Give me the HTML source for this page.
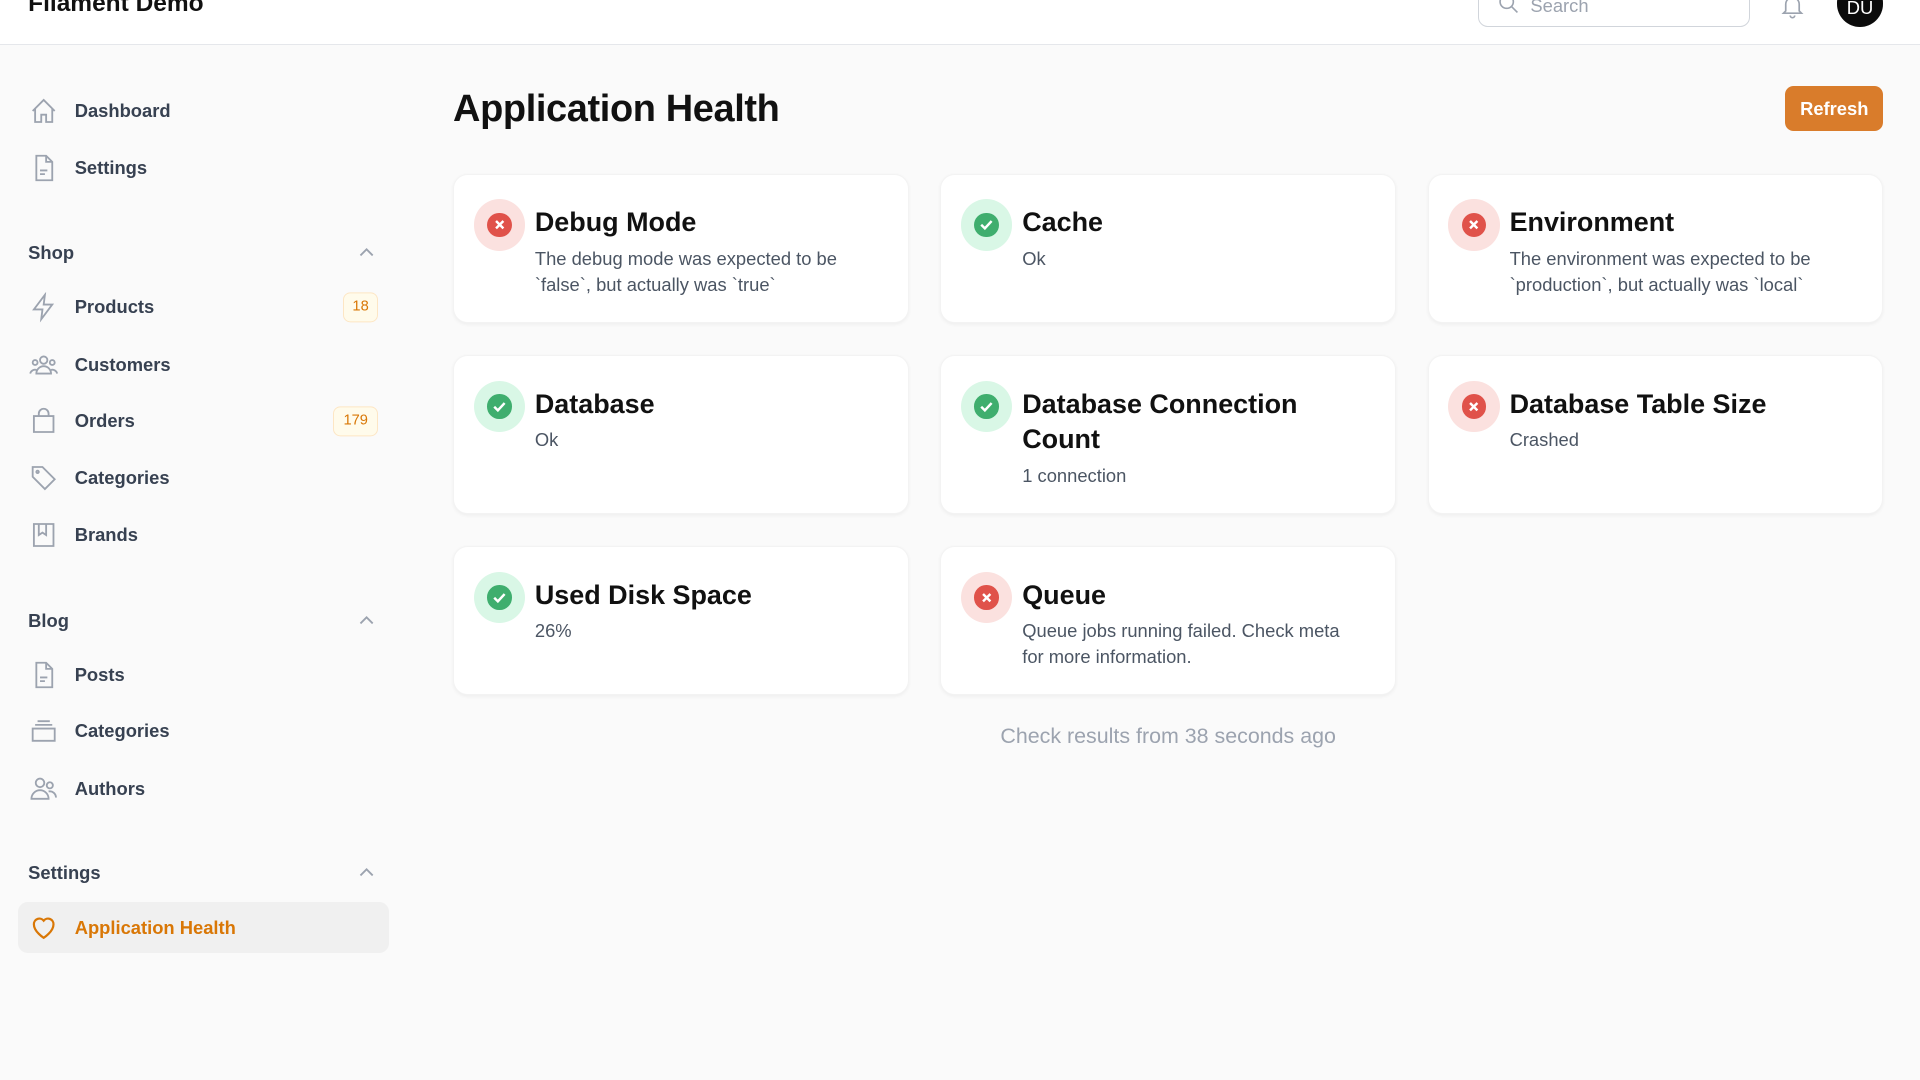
<!DOCTYPE html>
<html><head><meta charset="utf-8"><style>
*{box-sizing:border-box;margin:0;padding:0}
html,body{width:1920px;height:1080px;overflow:hidden;background:#fafafa}
#r{zoom:1.22449;width:1568px;height:882px;position:relative;font-family:"Liberation Sans",sans-serif;color:#111827}
.hdr{position:absolute;left:0;top:0;width:1568px;height:37px;background:#fff;border-bottom:1px solid #e5e7eb}
.brand{position:absolute;left:23px;top:-8px;font-size:20px;font-weight:bold;color:#111}
.search{position:absolute;left:1207px;top:-10px;width:222px;height:32px;border:1px solid #d1d5db;border-radius:8px;background:#fff}
.search span{position:absolute;left:42px;top:5px;color:#9ca3af;font-size:15px}
.av{position:absolute;left:1500px;top:-16px;width:38px;height:38px;border-radius:50%;background:#0b0b0b;color:#fff;font-size:15px;text-align:center;line-height:46px}
.it{position:absolute;left:61px;transform:translateY(-50%);font-size:15px;color:#374151;font-weight:600}
.ic{position:absolute;left:24px;transform:translateY(-50%)}
.grp{position:absolute;left:23px;transform:translateY(-50%);font-size:15px;font-weight:bold;color:#374151}
.chev{position:absolute;left:292px;transform:translateY(-50%)}
.badge{position:absolute;transform:translateY(-50%);border:1px solid #fde6c4;background:#fffbeb;color:#d97706;font-size:12px;border-radius:6px;height:24px;line-height:22px;text-align:center}
h1{position:absolute;left:370px;top:72px;font-size:31px;font-weight:bold;color:#111;letter-spacing:-0.3px}
.btn{position:absolute;left:1458px;top:70px;width:80px;height:37px;background:#d97c2b;border-radius:7px;color:#fff;font-weight:bold;font-size:15px;text-align:center;line-height:37px}
.card{position:absolute;width:372px;background:#fff;border-radius:12px;box-shadow:0 1px 3px rgba(0,0,0,.05);border:1px solid #f3f3f3}
.ci{position:absolute;left:16px;top:20px;width:42px;height:42px;border-radius:50%}
.ci.bad{background:#fbe1df}.ci.ok{background:#d9f7e6}
.ci i{position:absolute;left:11px;top:11px;width:20px;height:20px;border-radius:50%}
.bad i{background:#e0524a}.ok i{background:#3fae6e}
.ci svg{position:absolute;left:0;top:0}
.ct{position:absolute;left:66px;top:25px;font-size:22px;font-weight:bold;color:#111;line-height:29px;width:290px}
.cd{position:absolute;left:66px;font-size:15px;color:#4b5563;line-height:21px;width:285px}
.foot{position:absolute;left:770px;width:368px;top:591px;text-align:center;color:#9ca3af;font-size:17.5px}
</style></head><body><div id="r">
<div class="hdr"><div class="brand">Filament Demo</div>
<div class="search"><svg style="position:absolute;left:14px;top:2px" width="20" height="20" viewBox="0 0 24 24" fill="none" stroke="#9ca3af" stroke-width="1.6"><circle cx="10.5" cy="10.5" r="6.5"/><path d="M15.5 15.5L21 21"/></svg><span>Search</span></div>
<svg style="position:absolute;left:1453px;top:-6px" width="22" height="22" viewBox="0 0 24 24" fill="none" stroke="#9ca3af" stroke-width="1.5"><path d="M6 16V10a6 6 0 0112 0v6l2 2H4z M10 20a2 2 0 004 0"/></svg>
<div class="av">DU</div></div>

<svg class="ic" style="top:91px" width="24" height="24" viewBox="0 0 24 24" fill="none" stroke="#9ca3af" stroke-width="1.5"><path d="M3 12L12 3l9 9M5 10v11h5v-6h4v6h5V10"/></svg>
<div class="it" style="top:91px">Dashboard</div>
<svg class="ic" style="top:137px" width="24" height="24" viewBox="0 0 24 24" fill="none" stroke="#9ca3af" stroke-width="1.5"><path d="M6 2h8l5 5v15H6z M14 2v5h5 M9 14h6 M9 17h4"/></svg>
<div class="it" style="top:137px">Settings</div>

<div class="grp" style="top:207px">Shop</div>
<svg class="chev" style="top:207px" width="14" height="14" viewBox="0 0 14 14" fill="none" stroke="#9ca3af" stroke-width="1.5"><path d="M2 9l5-5 5 5"/></svg>
<svg class="ic" style="top:251px" width="24" height="24" viewBox="0 0 24 24" fill="none" stroke="#9ca3af" stroke-width="1.5"><path d="M13 2L4 14h7l-1 8 9-12h-7z"/></svg>
<div class="it" style="top:251px">Products</div><div class="badge" style="top:251px;left:280px;width:29px">18</div>
<svg class="ic" style="top:298px" width="24" height="24" viewBox="0 0 24 24" fill="none" stroke="#9ca3af" stroke-width="1.5"><circle cx="12" cy="8" r="3"/><circle cx="5" cy="10" r="2"/><circle cx="19" cy="10" r="2"/><path d="M6 19a6 6 0 0112 0z M1 19a4 4 0 015-3 M23 19a4 4 0 00-5-3"/></svg>
<div class="it" style="top:298px">Customers</div>
<svg class="ic" style="top:344px" width="24" height="24" viewBox="0 0 24 24" fill="none" stroke="#9ca3af" stroke-width="1.5"><path d="M4 8h16v13H4z M8 8V6a4 4 0 018 0v2"/></svg>
<div class="it" style="top:344px">Orders</div><div class="badge" style="top:344px;left:272px;width:37px">179</div>
<svg class="ic" style="top:390px" width="24" height="24" viewBox="0 0 24 24" fill="none" stroke="#9ca3af" stroke-width="1.5"><path d="M3 3h8l10 10-8 8L3 11z"/><circle cx="7" cy="7" r="1"/></svg>
<div class="it" style="top:390px">Categories</div>
<svg class="ic" style="top:437px" width="24" height="24" viewBox="0 0 24 24" fill="none" stroke="#9ca3af" stroke-width="1.5"><path d="M4 3h16v18H4z M8 3v9l3-2 3 2V3"/></svg>
<div class="it" style="top:437px">Brands</div>

<div class="grp" style="top:507px">Blog</div>
<svg class="chev" style="top:507px" width="14" height="14" viewBox="0 0 14 14" fill="none" stroke="#9ca3af" stroke-width="1.5"><path d="M2 9l5-5 5 5"/></svg>
<svg class="ic" style="top:551px" width="24" height="24" viewBox="0 0 24 24" fill="none" stroke="#9ca3af" stroke-width="1.5"><path d="M6 2h8l5 5v15H6z M14 2v5h5 M9 14h6 M9 17h4"/></svg>
<div class="it" style="top:551px">Posts</div>
<svg class="ic" style="top:597px" width="24" height="24" viewBox="0 0 24 24" fill="none" stroke="#9ca3af" stroke-width="1.5"><path d="M3 10h18v10H3z M5 7h14 M7 4h10"/></svg>
<div class="it" style="top:597px">Categories</div>
<svg class="ic" style="top:644px" width="24" height="24" viewBox="0 0 24 24" fill="none" stroke="#9ca3af" stroke-width="1.5"><circle cx="9" cy="7" r="3.5"/><circle cx="17" cy="9" r="2.5"/><path d="M2 20a7 7 0 0114 0z M16 14a5 5 0 016 5"/></svg>
<div class="it" style="top:644px">Authors</div>

<div class="grp" style="top:713px">Settings</div>
<svg class="chev" style="top:713px" width="14" height="14" viewBox="0 0 14 14" fill="none" stroke="#9ca3af" stroke-width="1.5"><path d="M2 9l5-5 5 5"/></svg>
<div style="position:absolute;left:15px;top:737px;width:303px;height:41px;background:#f0f0f0;border-radius:8px"></div>
<svg class="ic" style="top:758px" width="24" height="24" viewBox="0 0 24 24" fill="none" stroke="#d97706" stroke-width="1.8"><path d="M12 20s-8-5-8-11a4.5 4.5 0 018-3 4.5 4.5 0 018 3c0 6-8 11-8 11z"/></svg>
<div class="it" style="top:758px;color:#d97706">Application Health</div>

<h1>Application Health</h1>
<div class="btn">Refresh</div>

<div class="card" style="left:370px;top:142px;height:122px"><div class="ci bad"><i></i><svg width="42" height="42"><path d="M18 18l6 6M24 18l-6 6" stroke="#fff" stroke-width="2"/></svg></div><div class="ct">Debug Mode</div><div class="cd" style="top:58px">The debug mode was expected to be `false`, but actually was `true`</div></div>
<div class="card" style="left:768px;top:142px;height:122px"><div class="ci ok"><i></i><svg width="42" height="42"><path d="M16.5 21l3 3 5.5-6" fill="none" stroke="#fff" stroke-width="2"/></svg></div><div class="ct">Cache</div><div class="cd" style="top:58px">Ok</div></div>
<div class="card" style="left:1166px;top:142px;height:122px"><div class="ci bad"><i></i><svg width="42" height="42"><path d="M18 18l6 6M24 18l-6 6" stroke="#fff" stroke-width="2"/></svg></div><div class="ct">Environment</div><div class="cd" style="top:58px;width:300px">The environment was expected to be `production`, but actually was `local`</div></div>

<div class="card" style="left:370px;top:290px;height:130px"><div class="ci ok"><i></i><svg width="42" height="42"><path d="M16.5 21l3 3 5.5-6" fill="none" stroke="#fff" stroke-width="2"/></svg></div><div class="ct">Database</div><div class="cd" style="top:58px">Ok</div></div>
<div class="card" style="left:768px;top:290px;height:130px"><div class="ci ok"><i></i><svg width="42" height="42"><path d="M16.5 21l3 3 5.5-6" fill="none" stroke="#fff" stroke-width="2"/></svg></div><div class="ct">Database Connection Count</div><div class="cd" style="top:87px">1 connection</div></div>
<div class="card" style="left:1166px;top:290px;height:130px"><div class="ci bad"><i></i><svg width="42" height="42"><path d="M18 18l6 6M24 18l-6 6" stroke="#fff" stroke-width="2"/></svg></div><div class="ct">Database Table Size</div><div class="cd" style="top:58px">Crashed</div></div>

<div class="card" style="left:370px;top:446px;height:122px"><div class="ci ok"><i></i><svg width="42" height="42"><path d="M16.5 21l3 3 5.5-6" fill="none" stroke="#fff" stroke-width="2"/></svg></div><div class="ct">Used Disk Space</div><div class="cd" style="top:58px">26%</div></div>
<div class="card" style="left:768px;top:446px;height:122px"><div class="ci bad"><i></i><svg width="42" height="42"><path d="M18 18l6 6M24 18l-6 6" stroke="#fff" stroke-width="2"/></svg></div><div class="ct">Queue</div><div class="cd" style="top:58px;width:270px">Queue jobs running failed. Check meta for more information.</div></div>

<div class="foot">Check results from 38 seconds ago</div>
</div></body></html>
